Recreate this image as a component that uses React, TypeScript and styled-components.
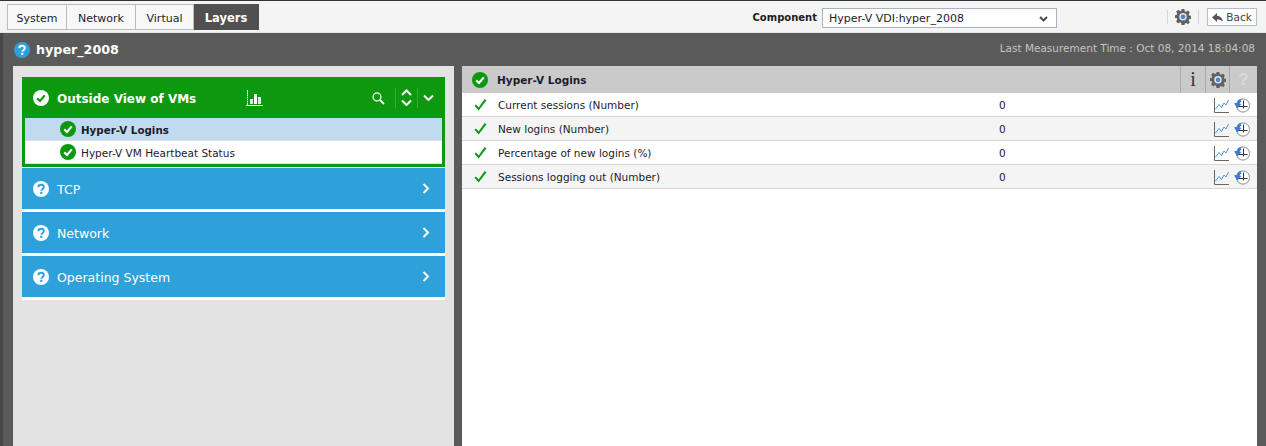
import React from 'react';
import styled, { createGlobalStyle } from 'styled-components';

const Global = createGlobalStyle`
  html, body { margin: 0; padding: 0; }
  body {
    width: 1266px;
    height: 446px;
    overflow: hidden;
    font-family: "DejaVu Sans", "Liberation Sans", sans-serif;
    font-size: 11px;
    color: #1c1c2c;
  }
`;

const Page = styled.div`
  width: 1266px;
  height: 446px;
  display: flex;
  flex-direction: column;
  overflow: hidden;
`;

const Toolbar = styled.div`
  height: 31px;
  flex: none;
  display: flex;
  align-items: flex-start;
  padding: 0 9px 0 7px;
  background: #f4f4f4;
  border-top: 1px solid #333;
  border-bottom: 1px solid #e4e4e4;
`;

const Tabs = styled.div`
  display: flex;
  margin-top: 3px;
`;

const Tab = styled.div<{ $active?: boolean; $w: number }>`
  width: ${p => p.$w}px;
  height: 26px;
  box-sizing: border-box;
  padding-top: 2px;
  display: flex;
  align-items: center;
  justify-content: center;
  font-size: 11px;
  border: solid #bcbcbc;
  border-width: 1px 1px 1px 0;
  background: #f8f8f8;
  &:first-child { border-left-width: 1px; }
  ${p => p.$active && `
    background: #505050;
    border-color: #505050;
    color: #fff;
    font-weight: bold;
    font-size: 11.5px;
  `}
`;

const ComponentLabel = styled.span`
  margin: 11px 5px 0 auto;
  font-weight: bold;
  font-size: 10px;
  color: #1c1c1c;
`;

const Select = styled.div`
  width: 235px;
  height: 20px;
  box-sizing: border-box;
  margin-top: 7px;
  padding: 1px 8px 0 6px;
  display: flex;
  align-items: center;
  justify-content: space-between;
  background: #fff;
  border: 1px solid #a9b4c4;
`;

const Sep = styled.div<{ $left?: number }>`
  width: 1px;
  height: 14px;
  margin-top: 9px;
  margin-left: ${p => p.$left ?? 0}px;
  background: #d4d4d4;
`;

const GearSlot = styled.div`
  margin: 8px 7px 0;
  display: flex;
`;

const BackButton = styled.div`
  width: 50px;
  height: 18px;
  box-sizing: border-box;
  margin: 7px 0 0 8px;
  display: flex;
  align-items: center;
  justify-content: center;
  gap: 3px;
  background: #fff;
  border: 1px solid #b6bec9;
  font-size: 10.5px;
  color: #444;
`;

const Shell = styled.div`
  flex: 1;
  min-height: 0;
  display: flex;
  flex-direction: column;
  padding: 0 9px 0 13px;
  background: linear-gradient(90deg, #474747 0, #474747 3px, #5a5a5a 3px);
`;

const TitleBar = styled.div`
  height: 33px;
  flex: none;
  margin-left: -13px;
  padding: 0 2px 0 14px;
  display: flex;
  align-items: center;
`;

const Title = styled.h1`
  margin: 0 0 0 6px;
  font-size: 12.7px;
  font-weight: bold;
  color: #fff;
`;

const Measure = styled.span`
  margin: 0 0 4px auto;
  font-size: 10.5px;
  color: #c4c4c4;
`;

const Columns = styled.div`
  flex: 1;
  min-height: 0;
  display: flex;
  gap: 8px;
`;

const LeftPanel = styled.div`
  width: 441px;
  flex: none;
  box-sizing: border-box;
  padding: 11px 9px 0;
  background: #e3e3e3;
`;

const OpenGroup = styled.div`
  background: #0c980f;
  padding: 0 3px 3px;
  border-bottom: 1px solid #fff;
`;

const GroupHead = styled.div<{ $open?: boolean }>`
  height: 41px;
  display: flex;
  align-items: center;
  margin: ${p => (p.$open ? '0 -3px' : '0')};
  padding: 0 ${p => (p.$open ? 11 : 15)}px 0 11px;
  color: #fff;
  font-size: 12.5px;
`;

const GroupTitle = styled.span<{ $bold?: boolean }>`
  margin-left: 8px;
  padding-top: 2px;
  font-weight: ${p => (p.$bold ? 'bold' : 'normal')};
  font-size: ${p => (p.$bold ? '12px' : '12.5px')};
`;

const SubRow = styled.div<{ $selected?: boolean }>`
  height: 23px;
  box-sizing: border-box;
  padding-left: 35px;
  display: flex;
  align-items: center;
  gap: 5px;
  background: ${p => (p.$selected ? '#c0daf0' : '#fff')};
  font-weight: ${p => (p.$selected ? 'bold' : 'normal')};
  font-size: ${p => (p.$selected ? '10.3px' : '10.5px')};
  border-bottom: 1px solid #e0e0e0;
`;

const SubLabel = styled.span`
  padding-top: 2px;
`;

const Collapsed = styled.div`
  background: #2fa1da;
  margin-bottom: 3px;
  &:last-child { margin-bottom: 0; box-shadow: 0 1px 0 #fff; }
`;

const WhiteLine = styled.div`
  height: 3px;
  background: #fff;
  margin-top: -3px;
`;

const HeadTools = styled.div`
  margin-left: auto;
  display: flex;
  align-items: center;
`;

const ChartSlot = styled.div`
  margin-left: 50px;
  display: flex;
`;

const SearchSlot = styled.div`
  margin-right: 5px;
  display: flex;
  padding-top: 2px;
`;

const ToolDivider = styled.div<{ $after: number }>`
  width: 1px;
  height: 20px;
  background: #3aa83c;
  margin: 0 ${p => p.$after}px 0 5px;
`;

const UpDown = styled.div`
  display: flex;
  flex-direction: column;
  gap: 3px;
`;

const RightPanel = styled.div`
  flex: 1;
  background: #fff;
`;

const DetailHead = styled.div`
  height: 27px;
  display: flex;
  align-items: center;
  padding-left: 10px;
  background: #cacaca;
  font-weight: bold;
  font-size: 10.5px;
`;

const DetailTitle = styled.span`
  margin-left: 9px;
  padding-top: 1px;
`;

const HeadBtns = styled.div`
  margin-left: auto;
  display: flex;
  height: 100%;
`;

const HeadBtn = styled.div<{ $w: number }>`
  width: ${p => p.$w}px;
  display: flex;
  align-items: center;
  justify-content: center;
  border-left: 1px solid #aaa;
  box-sizing: border-box;
  font-family: "Liberation Serif", serif;
  font-size: 20px;
  font-weight: normal;
  color: #333;
`;

const GhostMark = styled.span`
  font-family: "Liberation Sans", sans-serif;
  font-weight: bold;
  font-size: 17px;
  color: #dadada;
`;

const Row = styled.div<{ $alt?: boolean }>`
  height: 24px;
  box-sizing: border-box;
  display: grid;
  grid-template-columns: 36px 501px 1fr auto;
  align-items: center;
  background: ${p => (p.$alt ? '#f4f4f4' : '#fff')};
  border-bottom: 1px solid #d8d8d8;
  font-size: 10.5px;
`;

const CheckCell = styled.div`
  display: flex;
  justify-content: center;
`;

const RowIcons = styled.div`
  display: flex;
  align-items: center;
  gap: 5px;
  padding: 2px 7px 0 0;
`;

const StatusOk = ({ size = 16, fill = '#0c980f', mark = '#fff' }: { size?: number; fill?: string; mark?: string }) => (
  <svg width={size} height={size} viewBox="0 0 16 16">
    <circle cx="8" cy="8" r="8" fill={fill} />
    <path d="M4.2 8.4 7 11l4.8-5.6" fill="none" stroke={mark} strokeWidth="2.2" />
  </svg>
);

const StatusUnknown = ({ size = 16, fill = '#fff', mark = '#2fa1da' }: { size?: number; fill?: string; mark?: string }) => (
  <svg width={size} height={size} viewBox="0 0 16 16">
    <circle cx="8" cy="8" r="8" fill={fill} />
    <path d="M5.3 6.2C5.4 4.6 6.6 3.8 8 3.8c1.6 0 2.8.9 2.8 2.3 0 1.2-.8 1.7-1.5 2.2-.6.4-.9.7-.9 1.4" fill="none" stroke={mark} strokeWidth="1.9" />
    <rect x="7.2" y="10.8" width="2.1" height="2.1" fill={mark} />
  </svg>
);

const Chevron = ({ dir }: { dir: 'right' | 'down' | 'up' }) => {
  const d = dir === 'right' ? 'M1.5 1 6 5.5 1.5 10' : dir === 'down' ? 'M1 1.5 5.5 6 10 1.5' : 'M1 6 5.5 1.5 10 6';
  const w = dir === 'right' ? 8 : 11;
  const h = dir === 'right' ? 11 : 7;
  return (
    <svg width={w} height={h} viewBox={`0 0 ${w} ${h}`} style={{ display: 'block' }}>
      <path d={d} fill="none" stroke="#fff" strokeWidth="2" />
    </svg>
  );
};

const BarsIcon = () => (
  <svg width="17" height="16" viewBox="0 0 17 16">
    <path d="M1.5 0v15.5" fill="none" stroke="#fff" strokeWidth="1" strokeDasharray="1.6 .6" />
    <path d="M0 15.5h17" stroke="#fff" />
    <rect x="4" y="9" width="3" height="5" fill="#d8f0d8" />
    <rect x="8" y="4" width="3" height="10" fill="#fff" />
    <rect x="12" y="7" width="3" height="7" fill="#d8f0d8" />
  </svg>
);

const SearchIcon = () => (
  <svg width="13" height="13" viewBox="0 0 13 13">
    <circle cx="5" cy="5" r="3.9" fill="none" stroke="#d6f0d6" strokeWidth="1.5" />
    <path d="M8 8l4 4" stroke="#fff" strokeWidth="1.8" />
  </svg>
);

const Gear = ({ size = 16 }: { size?: number }) => (
  <svg width={size} height={size} viewBox="0 0 18 18">
    <path
      d="M7.4 0h3.2l.4 2.4 1.5.6 2-1.4 2.3 2.3-1.4 2 .6 1.5 2.4.4v3.2l-2.4.4-.6 1.5 1.4 2-2.3 2.3-2-1.4-1.5.6-.4 2.4H7.4L7 15.4l-1.5-.6-2 1.4-2.3-2.3 1.4-2-.6-1.5L0 10V7l2-.4.6-1.5-1.4-2 2.3-2.3 2 1.4L7 2.1z"
      fill="#5f6265"
    />
    <circle cx="9" cy="8.8" r="4.2" fill="#dfe6ee" />
    <circle cx="9" cy="8.8" r="2.6" fill="#4d86d0" />
  </svg>
);

const TickIcon = () => (
  <svg width="13" height="13" viewBox="0 0 13 13">
    <path d="M1.2 7.2 4.6 11 11.6 1.6" fill="none" stroke="#0c980f" strokeWidth="2" />
  </svg>
);

const TrendIcon = () => (
  <svg width="15" height="15" viewBox="0 0 15 15">
    <path d="M.5 0v14.5H15" fill="none" stroke="#666" />
    <path d="M1.5 11 5 6.5l2.5 3L10 5l2 2 2.5-5" fill="none" stroke="#4a94e0" />
  </svg>
);

const HistoryIcon = () => (
  <svg width="16" height="15" viewBox="0 0 16 15">
    <circle cx="9" cy="7.5" r="6.6" fill="#fff" stroke="#8a8a8a" />
    <path d="M9.5 2.5v8M4.5 8.5h9" stroke="#333" />
    <path d="M6.5.8C4.5 1.4 3.4 3 3 4.8L0 5.4l3.6 5.2L7.4 6 5.6 5.6C5.9 4.6 6.3 4.2 7.4 3.8z" fill="#3a80d0" />
  </svg>
);

const BackArrow = () => (
  <svg width="11" height="9" viewBox="0 0 11 9">
    <path d="M5 0 0 4.5 5 9V6.4c2.6 0 4.4.6 6 2.1C10.4 5.2 8.2 3 5 2.7z" fill="#555" />
  </svg>
);

const groups = ['TCP', 'Network', 'Operating System'];

const measures = [
  'Current sessions (Number)',
  'New logins (Number)',
  'Percentage of new logins (%)',
  'Sessions logging out (Number)',
];

export default function App() {
  return (
    <Page>
      <Global />
      <Toolbar>
        <Tabs>
          <Tab $w={60}>System</Tab>
          <Tab $w={69}>Network</Tab>
          <Tab $w={58}>Virtual</Tab>
          <Tab $w={65} $active>Layers</Tab>
        </Tabs>
        <ComponentLabel>Component</ComponentLabel>
        <Select>
          <span>Hyper-V VDI:hyper_2008</span>
          <svg width="9" height="6" viewBox="0 0 9 6">
            <path d="M1 1l3.5 3.5L8 1" fill="none" stroke="#444" strokeWidth="1.8" />
          </svg>
        </Select>
        <Sep $left={110} />
        <GearSlot>
          <Gear />
        </GearSlot>
        <Sep />
        <BackButton>
          <BackArrow />
          Back
        </BackButton>
      </Toolbar>
      <Shell>
        <TitleBar>
          <StatusUnknown size={16} fill="#2fa1da" mark="#fff" />
          <Title>hyper_2008</Title>
          <Measure>Last Measurement Time : Oct 08, 2014 18:04:08</Measure>
        </TitleBar>
        <Columns>
          <LeftPanel>
            <OpenGroup>
              <GroupHead $open>
                <StatusOk fill="#fff" mark="#0c980f" />
                <GroupTitle $bold>Outside View of VMs</GroupTitle>
                <ChartSlot><BarsIcon /></ChartSlot>
                <HeadTools>
                  <SearchSlot><SearchIcon /></SearchSlot>
                  <ToolDivider $after={5} />
                  <UpDown>
                    <Chevron dir="up" />
                    <Chevron dir="down" />
                  </UpDown>
                  <ToolDivider $after={5} />
                  <Chevron dir="down" />
                </HeadTools>
              </GroupHead>
              <SubRow $selected><StatusOk /><SubLabel>Hyper-V Logins</SubLabel></SubRow>
              <SubRow><StatusOk /><SubLabel>Hyper-V VM Heartbeat Status</SubLabel></SubRow>
            </OpenGroup>
            {groups.map(g => (
              <React.Fragment key={g}>
                <Collapsed>
                  <GroupHead>
                    <StatusUnknown />
                    <GroupTitle>{g}</GroupTitle>
                    <HeadTools><Chevron dir="right" /></HeadTools>
                  </GroupHead>
                </Collapsed>
                <WhiteLine />
              </React.Fragment>
            ))}
          </LeftPanel>
          <RightPanel>
            <DetailHead>
              <StatusOk />
              <DetailTitle>Hyper-V Logins</DetailTitle>
              <HeadBtns>
                <HeadBtn $w={25}>i</HeadBtn>
                <HeadBtn $w={24}><Gear /></HeadBtn>
                <HeadBtn $w={28}><GhostMark>?</GhostMark></HeadBtn>
              </HeadBtns>
            </DetailHead>
            {measures.map((m, i) => (
              <Row key={m} $alt={i % 2 === 1}>
                <CheckCell><TickIcon /></CheckCell>
                <span>{m}</span>
                <span>0</span>
                <RowIcons>
                  <TrendIcon />
                  <HistoryIcon />
                </RowIcons>
              </Row>
            ))}
          </RightPanel>
        </Columns>
      </Shell>
    </Page>
  );
}
